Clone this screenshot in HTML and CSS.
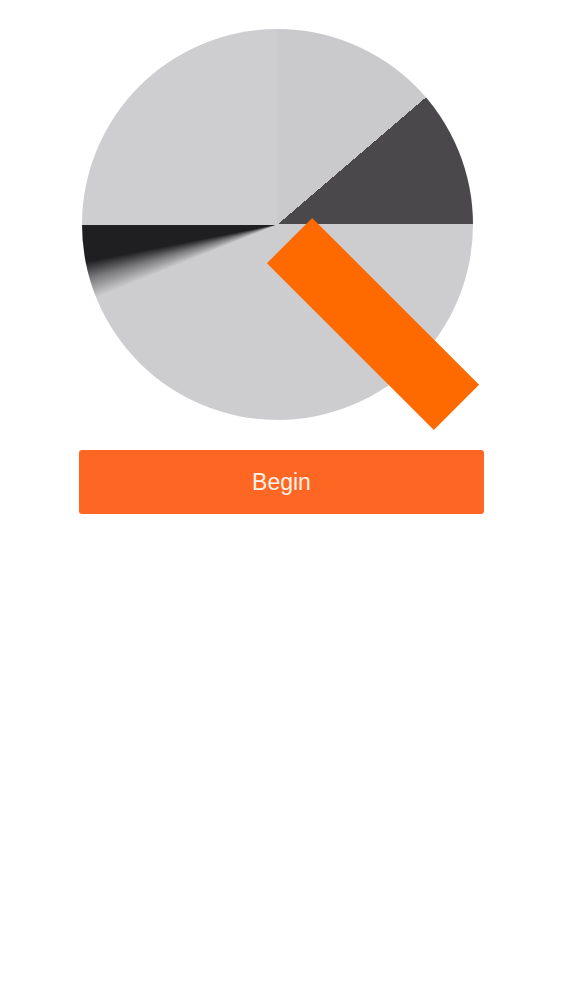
FILE: index.html
```html
<!DOCTYPE html>
<html>
<head>
<meta charset="utf-8">
<link rel="stylesheet" href="styles.css">
</head>
<body>
<main class="screen">
  <div class="logo">
    <div class="pie"></div>
    <div class="bar"></div>
  </div>
  <button class="begin">Begin</button>
</main>
</body>
</html>
```
FILE: styles.css
```css
html, body {
  margin: 0;
  padding: 0;
  background: #ffffff;
}
.screen {
  width: 563px;
  display: flex;
  flex-direction: column;
  font-family: "Liberation Sans", Arial, sans-serif;
}
.logo {
  position: relative;
  width: 391px;
  height: 391px;
  margin: 29px 0 0 82px;
}
.pie {
  width: 100%;
  height: 100%;
  border-radius: 50%;
  background: conic-gradient(
    #cac9cc 0deg,
    #cac9cc 49.4deg,
    #4a484b 49.4deg,
    #4a484b 90deg,
    #cdcccf 90deg,
    #cdcccf 248deg,
    #7a797c 254deg,
    #1f1e21 259deg,
    #1f1e21 270deg,
    #cecdd0 270deg,
    #cecdd0 360deg
  );
}
.bar {
  position: absolute;
  left: 173px;
  top: 263px;
  width: 236px;
  height: 64px;
  background: #fe6900;
  transform: rotate(45deg);
}
.begin {
  margin: 30px 0 0 79px;
  width: 405px;
  height: 64px;
  border: none;
  border-radius: 3px;
  background: #fe6723;
  color: #fdf1e8;
  font-family: "Liberation Sans", Arial, sans-serif;
  font-size: 23px;
  padding: 0;
}
```
